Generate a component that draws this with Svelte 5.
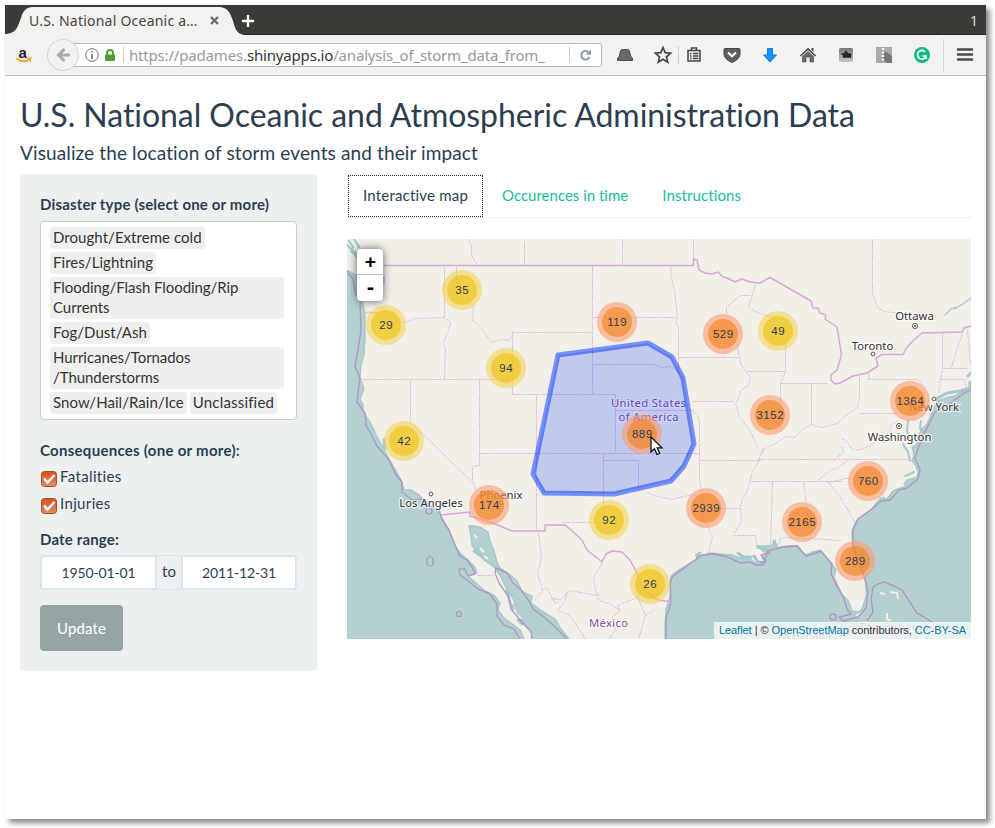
<script>
  const diseases = [
    ['Drought/Extreme cold'],
    ['Fires/Lightning'],
    ['Flooding/Flash Flooding/Rip', 'Currents'],
    ['Fog/Dust/Ash'],
    ['Hurricanes/Tornados', '/Thunderstorms'],
    ['Snow/Hail/Rain/Ice'],
    ['Unclassified']
  ];
  const clusters = [
    [386, 325, 29], [462, 290, 35], [506, 368, 94], [404, 441, 42], [617, 322, 119],
    [723, 334, 529], [778, 331, 49], [770, 415, 3152], [910, 401, 1364], [642, 434, 889],
    [489, 505, 174], [609, 520, 92], [706, 508, 2939], [802, 522, 2165], [868, 481, 760],
    [855, 561, 289], [650, 584, 26]
  ];
  const cities = [
    ['Ottawa', 914.5, 320, 915, 326, true], ['Toronto', 872.5, 350, 873, 354, false],
    ['New York', 934, 411, 934, 399, false], ['Washington', 899.5, 440.5, 899, 426, true],
    ['Los Angeles', 431, 507, 431, 494, false], ['Phoenix', 501, 499, 501, 503, false]
  ];
  const land =
    'M340 232H980V385L971 388 963 391 955 396 946 398 937 401 932 412 927 424 921 430 918 437 916 446 912 447 914 455 912 461 916 466 918 472 917 477 907 480 904 484 907 486 897 489 893 491 887 499 881 498 877 502 872 509 867 513 858 519 855 523 852 531 852 537 853 550 858 559 862 572 866 581 866 597 862 609 858 612 852 611 849 602 842 594 838 586 834 577 836 570 830 562 824 555 820 550 812 552 806 555 801 551 798 546 787 546 778 548 775 541 774 545 766 546 757 546 763 551 766 554 762 558 765 562 759 561 756 563 750 559 740 558 732 555 720 554 710 553 701 556 696 554 697 560 690 563 682 568 677 571 671 576 670 583 671 592 669 600 666 609 665 625V646H575L569 639 561 629 555 619 547 614 539 609 531 603 532 596 522 591 517 581 508 573 500 568 497 562 494 551 490 541 488 532 480 527 474 526 469 526 471 536 472 546 478 552 484 560 494 567 501 577 505 586 511 594 514 603 518 614 524 624 532 631 531 646H526L524 639 520 630 511 623 504 618 498 610 500 603 495 596 484 590 477 584 468 576 477 573 475 567 467 559 460 553 455 545 450 533 444 522 440 514 435 508 426 502 419 495 411 490 404 490 401 480 395 469 389 459 383 447 377 437 374 430 370 422 363 412 363 405 360 399 364 389 360 377 361 365 364 355 365 337 365 313 361 295 359 285 356 275 347 270 340 268Z';
  const maritime =
    'M347 271L353 279 355 292 360 301 361 330 358 350 355 366 360 378 357 402 365 413 366 425 372 436 377 446 389 460 396 475 402 482 402 492 412 500 424 499 429 506 439 510 442 519 449 530 455 545 460 556 467 560 472 567 475 574 468 576 465 569 459 569 460 575 467 580 478 589 490 594 497 604 497 616 504 625 514 629 520 639 M532 639L531 632 521 621 511 609 508 596 499 583 495 573 496 568 507 573 513 583 521 590 529 601 533 609 544 617 555 627 567 639 M666 639L666 618 671 603 670 585 672 577 683 569 692 562 702 555 713 554 728 557 740 563 750 562 756 565 763 565 766 561 761 555 770 553 M760 563L765 561 768 551 782 547 797 546 806 556 813 554 821 551 832 564 831 574 838 588 844 599 847 609 851 614 844 616 839 617 843 621 858 617 866 608 868 592 865 580 858 561 853 544 853 530 858 519 873 508 881 501 890 500 899 490 907 488 918 479 920 470 915 458 917 451 925 432 935 412 952 402 964 393 971 390';
  const states =
    'M468 239L471 246V255L477 265M524 241V265M444 267V317L450 322 448 330 443 342 445 347 444 379M456 267V280L465 295 473 305 472 320 478 325 483 330 491 342 500 339 508 340 510 336 512 340M365 312L377 313 386 321 405 322 414 318 444 317M362 379H512M410 379V422L427 438 471 481M479 379V465L472 466V480L475 490M512 394V332H592M512 394H615V410H693M536 394V530M479 453H699M622 239V265M693 239V259M592 265V394M592 317H677M592 364H653L660 367 670 366 678 371M670 265L671 278 674 290 677 317 675 323 678 327V371L683 380M678 357H738M692 401H733M690 408L697 415 699 423V478L702 500M755 284L748 307 757 312 771 317 784 324M750 295L740 295 726 306V314M726 320L737 346 740 363 744 369 750 377 748 385 740 390 738 398 735 403 739 416 747 427 751 433 757 447M747 371H785M615 410V453M562 522H603V453M603 460H638V492M647 492L656 496 663 497 671 499 683 496 692 494 702 498V516L708 527 712 537 708 552M699 460H760M763 447L757 463 752 471 747 490 742 498 740 507 741 520 733 535H755L756 545M750 481H842M710 508H740M757 459H912M772 481L770 545M803 481L810 538 840 540M778 545L780 537 810 538M828 482L840 497 855 523M828 482L845 478 862 479 870 480 884 497M817 480L830 470 838 467 847 460M760 454L766 447 775 443 785 436 795 437 800 430 810 424 822 427 837 423 845 415 857 407 859 397V376M859 413H915M868 373V379H918L925 387M780 383H827M785 340V371L780 383V430M811 383V423M872 239V293L877 307 883 311 903 313M942 332V368L940 380 938 393M962 333L956 350 951 367M967 330L970 364M942 368H967M940 379H964L966 388M897 420L890 425 889 432 879 437 872 444 861 449 852 449 845 440 841 438M835 458L843 452 841 446M538 532L541 557 537 573 542 590 534 600M542 590L546 587 555 603 560 600M477 575H493M602 562L593 577 595 590 599 600 610 604 620 610M550 598L560 599 569 590 597 595 600 593M567 592L564 601 557 610 568 614 575 623 585 639M620 610L617 605 637 597 643 587M637 597L645 615 654 609M645 615L638 639M620 610L612 617 615 630 608 639M555 524L565 525';
  const border =
    'M384 265.5H693.5V259L697 260 699 270 705 273 712 274 718 272 723 277 727 278 735 282 742 279 750 282 760 283 770 277.5 811 301 813 308 818 308 820 313 826 315 825 319 837 327 841.5 355 837 370 831 375 831 380 835 384 840 383 853 376 867 373 878 366 876 358 882 354.5H903L907 347 913 341 922 333 962 332 964 328 971 326M441 515L470 512 470 516 490 522 512 531H545V525H565L571 530 582 540 587 550 602 562 606 554 612 551 622 552 630 560 637 573 641 585 647 593 658 600 672 602';
</script>

<div class="page">
<div class="window">
  <div class="titlebar">
    <svg class="tabshape" width="250" height="30" viewBox="0 0 250 30"><path d="M0 30V29C12 29 13 20 16 13C18 6 21 2 28 2H214C222 2 225 7 228 16C230 23 231 29 240 30Z" fill="#f3f2f1" /></svg>
    <span class="tabtitle">U.S. National Oceanic a…</span>
    <svg class="close" width="9" height="9" viewBox="0 0 9 9"><path d="M1 1L8 8M8 1L1 8" stroke="#6c6b69" stroke-width="2.4" /></svg>
    <svg class="plus" width="14" height="14" viewBox="0 0 14 14"><path d="M7 1V13M1 7H13" stroke="#fff" stroke-width="2.4" /></svg>
    <span class="one">1</span>
  </div>
  <div class="toolbar">
    <svg class="amazon" width="18" height="18" viewBox="0 0 18 18"><text x="3.4" y="11.6" font-family="Liberation Sans" font-weight="700" font-size="15" fill="#222">a</text><path d="M1.5 12.5Q8 17.5 14.5 13.5" fill="none" stroke="#f5a033" stroke-width="2" /><path d="M12 12.4L15.8 12 15.2 15.8" fill="none" stroke="#f5a033" stroke-width="1.2" /></svg>
    <div class="back"><svg width="16" height="16" viewBox="0 0 16 16"><path d="M15 8H4M9.5 2L3.5 8 9.5 14" fill="none" stroke="#acaba9" stroke-width="3" /></svg></div>
    <div class="url">
      <svg class="info" width="14" height="14" viewBox="0 0 14 14"><circle cx="7" cy="7" r="6.3" fill="none" stroke="#6b6b6b" /><path d="M7 6V11M7 3V4.6" stroke="#6b6b6b" stroke-width="1.6" /></svg>
      <svg class="lock" width="10" height="13" viewBox="0 0 10 13"><path d="M2 6V4Q2 1 5 1T8 4V6" fill="none" stroke="#509f2c" stroke-width="2" /><rect y="5.5" width="10" height="6.5" rx="1" fill="#509f2c" /></svg>
      <i></i>
      <span class="address">https://padames.<b>shinyapps.io</b>/analysis_of_storm_data_from_</span>
      <i class="end"></i>
      <svg class="reload" width="13" height="13" viewBox="0 0 13 13"><path d="M9.3 3A4.3 4.3 0 1 0 10.5 8" fill="none" stroke="#8d9aa8" stroke-width="2" /><path d="M6.5 5.8H12V.5Z" fill="#8d9aa8" /></svg>
    </div>
    <svg class="icons" width="384" height="40" viewBox="602 35 384 40">
      <path d="M622.5 49.5H627.5Q629 49.5 629.4 51L631 57 632.5 58V60.5H617.5V58L619 57 620.6 51Q621 49.5 622.5 49.5Z" fill="#6a6a6a" stroke="#4b4b4b" />
      <path d="M663 47.5L665.2 52.7 670.6 53.2 666.5 56.9 667.7 62.2 663 59.3 658.3 62.2 659.5 56.9 655.4 53.2 660.8 52.7Z" fill="none" stroke="#474747" stroke-width="1.7" />
      <path d="M678.5 46V64" stroke="#cfcecc" />
      <path d="M688 50.5H700V61H688ZM691.5 50V48H696.5V50M690 53.5H691.5M690 56H691.5M690 58.5H691.5M693 53.5H698.5M693 56H698.5M693 58.5H698.5" fill="none" stroke="#474747" stroke-width="1.5" />
      <path d="M725 48.5H739Q740 48.5 740 50V54Q740 59 732 62.5Q724 59 724 54V50Q724 48.5 725 48.5Z" fill="#606060" stroke="#444" />
      <path d="M728 52.5L732 56.3 736 52.5" fill="none" stroke="#fff" stroke-width="2.1" />
      <path d="M767.5 48.5H772.5V55H776.5L770 62 763.5 55H767.5Z" fill="#1693ff" stroke="#087be6" />
      <path d="M800.5 56L808 49 815.5 56" fill="none" stroke="#4c4c4c" stroke-width="1.7" /><path d="M802.5 56.5L808 51.5 813.5 56.5V62H810V57H806V62H802.5Z" fill="#6b6b6b" stroke="#505050" stroke-width=".7" /><path d="M811.5 48H813.5V52L811.5 50Z" fill="#505050" />
      <defs><linearGradient id="gray" x2="0" y2="1"><stop stop-color="#777" /><stop offset="1" stop-color="#c5c5c5" /></linearGradient></defs>
      <rect x="839" y="48" width="14" height="14" rx="1.5" fill="url(#gray)" /><path d="M841.5 54H843.5V57H850.5V54H848.5M846 51.5V57M844 54L846 51.5 848 54Z" fill="#262626" stroke="#262626" stroke-width="1.3" />
      <path d="M876 47H892V63H876Z" fill="#ababab" /><path d="M885 51L892 56V63H887L882 59Z" fill="#777" /><path d="M883 48V61" stroke="#fff" stroke-width="2.2" stroke-dasharray="2 1.5" />
      <circle cx="922" cy="55" r="8" fill="#11b981" /><path d="M925 51.8A4.3 4.3 0 1 0 926 56H922.5M926 56V59" fill="none" stroke="#fff" stroke-width="1.7" />
      <path d="M943.5 39V72" stroke="#d6d5d3" />
      <path d="M958 49.5H972M958 54.5H972M958 59.5H972" stroke="#4a4a4a" stroke-width="2.6" stroke-linecap="round" />
    </svg>
  </div>

  <main>
    <h2>U.S. National Oceanic and Atmospheric Administration Data</h2>
    <h4>Visualize the location of storm events and their impact</h4>
    <div class="columns">
      <aside>
        <label class="head" for="types">Disaster type (select one or more)</label>
        <div class="select" id="types">
          {#each diseases as lines}
            <div class="item" class:wide={lines.length > 1}>{lines[0]}{#if lines[1]}<br />{lines[1]}{/if}</div>
          {/each}
        </div>
        <div class="head cons">Consequences (one or more):</div>
        {#each ['Fatalities', 'Injuries'] as name}
          <div class="check"><svg width="16" height="16" viewBox="0 0 16 16"><defs><linearGradient id="or" x2="0" y2="1"><stop stop-color="#d4501f" /><stop offset="1" stop-color="#e38f6b" /></linearGradient></defs><rect x=".5" y=".5" width="15" height="15" rx="3" fill="url(#or)" stroke="#a84b2b" /><path d="M3 7.5L6.5 11.5 13.5 4" fill="none" stroke="#fff" stroke-width="2.4" /></svg><span>{name}</span></div>
        {/each}
        <div class="head range">Date range:</div>
        <div class="dates"><div class="date">1950-01-01</div><div class="to">to</div><div class="date last">2011-12-31</div></div>
        <button>Update</button>
      </aside>
      <section>
        <nav><a class="active">Interactive map</a><a>Occurences in time</a><a>Instructions</a></nav>
        <div class="map">
          <svg width="624" height="400" viewBox="347 239 624 400">
            <rect x="347" y="239" width="624" height="400" fill="#b5d0d0" />
            <path d={land} fill="#f2efe9" stroke="#a3c9cb" stroke-width="1.3" />
            <g fill="none" stroke="#a3c9cb" stroke-linecap="round" stroke-linejoin="round">
              <path d="M349 241L353 247 351 251 358 258 360 266M347 245L351 249 356 253 360 254M354 239L359 247" stroke-width="2.2" stroke-dasharray="3 1" />
              <path d="M347 274L354 280M368 312L378 313M384 277V284" stroke-width="1.2" />
              <path d="M945 315L951 309 957 307M954 309L963 304 971 298" stroke-width="1.2" />
              <path d="M936 399L947 393 960 391 971 388M968 376L971 373M970 382V388" stroke-width="3" />
              <path d="M908 421L907 430 909 438M921 421L920 428 925 434M903 444L908 452 910 461M905 476L914 472" stroke-width="2" />
              <path d="M738 553L743 557 751 557M758 547L767 550M758 562L754 556M697 556L700 553M774 541V546M384 440L385 448M474 551L481 556M507 590L513 609M518 620L522 624" stroke-width="3" />
            </g>
            <path d="M474 535l3 3M480 548l4 4M484 556l4 3M511 597l2 7M518 615l3 4M880 593l5 1M890 592l7 1 1 6M887 613v6l4 2M861 613l-5 3" fill="none" stroke="#f2efe9" stroke-width="2" />
            <path d={states} fill="none" stroke="#dfbfdf" stroke-width="1" stroke-dasharray="9 1 3 1" opacity=".95" transform="translate(.5 .5)" />
            <path d={maritime} fill="none" stroke="#ad8fc0" stroke-width="1.4" stroke-linejoin="round" opacity=".85" />
            <path d="M867 621L873 612 871 600 873 587 878 584 885 582 902 590 909 601 917 613 932 622" fill="none" stroke="#ad8fc0" stroke-width="1.2" />
            <g fill="none" stroke="#ad8fc0" stroke-width="1.2"><path d="M427 559Q430 554 433 559V564Q430 569 427 564Z" /><circle cx="459" cy="614" r="2.5" /><circle cx="833" cy="617" r="3" /><circle cx="429" cy="511" r="3" /></g>
            <path d={border} fill="none" stroke="#d6a9d5" stroke-width="1.5" stroke-linejoin="round" />
            <g class="labels">
              {#each cities as [name, x, y, cx, cy, capital]}
                <circle {cx} {cy} r={capital ? 2.6 : 1.9} fill="#f7f5f0" stroke="#555" stroke-width=".9" />
                {#if capital}<circle {cx} {cy} r="1" fill="#444" />{/if}
                <text {x} {y}>{name}</text>
              {/each}
              <g class="country"><text x="648.5" y="407" textLength="75">United States</text><text x="648.5" y="421" textLength="60">of America</text><text x="608.5" y="627" textLength="39">México</text></g>
              <text x="897" y="631" class="country" opacity=".6" textLength="76">The Bahamas</text><text x="810" y="640" opacity=".6" textLength="65">La Habana ⊙</text>
            </g>
            <path d="M558 355L648 343 672 357 683 378 694 444 684 466 671 481 614 494 544 493 533 474Z" fill="#03f" fill-opacity=".2" stroke="#03f" stroke-opacity=".5" stroke-width="5" stroke-linejoin="round" />
          </svg>
          {#each clusters as [x, y, n]}
            <div class="cluster" class:large={n >= 100} style="left:{x - 367}px;top:{y - 259}px"><div>{n}</div></div>
          {/each}
          <svg class="cursor" width="14" height="20" viewBox="0 0 14 20"><path d="M1 1V16L4.5 12.8 7 18.5 9.7 17.3 7.2 11.8H12Z" fill="#fff" stroke="#111" stroke-width="1.3" /></svg>
          <div class="zoom"><span>+</span><span>-</span></div>
          <div class="credit"><a>Leaflet</a> | © <a>OpenStreetMap</a> contributors, <a>CC-BY-SA</a></div>
        </div>
      </section>
    </div>
  </main>
</div>
</div>

<style>
  :global(body) { background: #fff; }
  * { box-sizing: border-box; }
  svg { display: block; flex: none; }
  .page { height: 828px; padding: 5px 0 0 5px; overflow: hidden; }
  .window { width: 981px; height: 814px; background: #fff; box-shadow: 4px 4px 5px rgba(0,0,0,.45), 0 0 1px rgba(0,0,0,.15); font-family: Lato, sans-serif; font-variant-ligatures: none; color: #2c3e50; }
  .titlebar { height: 30px; background: #3c3b37; border-bottom: 1px solid #292825; display: flex; align-items: center; position: relative; font: 14px/20px "Noto Sans", sans-serif; }
  .tabshape { position: absolute; left: 0; top: 0; }
  .tabtitle { position: relative; margin-left: 24px; width: 181px; color: #45443f; white-space: nowrap; margin-top: 2px; letter-spacing: .23px; }
  .close { position: relative; margin-top: 2px; }
  .plus { margin: 3px 0 0 22px; }
  .one { color: #dfdbd2; margin: 3px 8px 0 auto; }
  .toolbar { height: 41px; background: #f3f2f1; border-bottom: 1px solid #bcbbb9; display: flex; align-items: center; }
  .amazon { margin-left: 10px; margin-top: 0; overflow: visible; }
  .back { margin-left: 14px; width: 32px; height: 32px; border: 1px solid #d6d5d3; border-radius: 50%; background: #f3f2f1; display: grid; place-items: center; z-index: 1; }
  .url { margin-left: -8px; width: 532px; height: 24px; border: 1px solid #bcbbba; border-radius: 0 3px 3px 0; background: #fff; display: flex; align-items: center; padding-left: 13px; }
  .lock { margin-left: 6px; }
  .url i { width: 1px; height: 16px; background: #ccc; margin-left: 8px; }
  .address { margin-left: 5px; width: 440px; color: #999; font: 15px/22px "Noto Sans", sans-serif; white-space: nowrap; letter-spacing: -.17px; }
  .address b { font-weight: 400; color: #333; }
  .url .end { margin-left: 0; }
  .reload { margin-left: 9px; }
  main { padding: 21px 15px 0; }
  h2 { margin: 0; font-size: 32px; line-height: 35px; font-weight: 400; white-space: nowrap; letter-spacing: -.045px; }
  h4 { margin: 10px 0 0; font-size: 19px; line-height: 21px; font-weight: 400; white-space: nowrap; letter-spacing: .12px; }
  .columns { display: flex; gap: 30px; margin-top: 11px; }
  aside { width: 297px; height: 497px; background: #ecf0f1; border-radius: 4px; padding: 20px; font-size: 15px; }
  .head { display: block; font-weight: 700; line-height: 21px; font-size: 15px; white-space: nowrap; letter-spacing: .17px; }
  .select { margin-top: 6px; height: 199px; border: 1px solid #ccc; border-radius: 4px; background: #fff; padding: 5px 12px 0 9px; display: flex; flex-wrap: wrap; align-content: flex-start; gap: 3px; color: #333; line-height: 20px; }
  .item { background: #efefef; border-radius: 3px; padding: 0 3px 2px; white-space: nowrap; letter-spacing: .05px; }
  .item:last-child { letter-spacing: .18px; }
  .wide { width: 234px; letter-spacing: -.06px; }
  .cons { margin-top: 20px; letter-spacing: .28px; }
  .check { display: flex; height: 27px; gap: 3px; line-height: 21px; padding-left: 1px; margin-top: 0; letter-spacing: .35px; }
  .check svg { margin-top: 10px; }
  .check span { margin-top: 5px; }
  .range { margin-top: 14px; }
  .dates { display: flex; margin-top: 5px; height: 35px; font-size: 14px; line-height: 31px; text-align: center; }
  .date { width: 117px; border: 2px solid #dce4ec; background: #fff; border-radius: 3px 0 0 3px; letter-spacing: -.15px; }
  .last { width: 116px; border-radius: 0 3px 3px 0; }
  .to { width: 24px; border: solid #dce4ec; border-width: 1px 0; font-size: 15px; }
  button { margin-top: 15px; width: 83px; height: 46px; border: 0; border-radius: 4px; background: #95a5a6; color: #fff; font: 15px Lato, sans-serif; letter-spacing: .1px; }
  section { width: 624px; }
  nav { display: flex; height: 44px; border-bottom: 1px solid #ecf0f1; font-size: 15px; line-height: 38px; color: #18bc9c; white-space: nowrap; }
  nav a { padding: 2px 17px; }
  nav a:last-child { letter-spacing: .1px; }
  nav .active { color: #2c3e50; height: 42px; width: 135px; margin: 1px 2px 0 1px; padding: 0 14px; border: 1px dotted #222; letter-spacing: .2px; }
  .map { margin-top: 21px; position: relative; width: 624px; height: 400px; overflow: hidden; }
  .labels text { font: 11.3px "Noto Sans", sans-serif; fill: #333; text-anchor: middle; paint-order: stroke; stroke: rgba(255,255,255,.7); stroke-width: 2.5px; }
  .country text, .labels .country { fill: #8d4f95; }
  .cluster { position: absolute; width: 40px; height: 40px; border-radius: 50%; padding: 5px; background: rgba(241,211,87,.6); }
  .cluster div { width: 30px; height: 30px; border-radius: 50%; background: rgba(240,194,12,.6); font: 11.5px/30px "Liberation Sans", Arial, sans-serif; letter-spacing: .5px; padding-left: .5px; display: flex; justify-content: center; }
  .large { background: rgba(253,156,115,.6); }
  .large div { background: rgba(241,128,23,.6); }
  .cursor { position: absolute; left: 303px; top: 197px; }
  .zoom { position: absolute; left: 10px; top: 10px; width: 26px; height: 52px; border-radius: 4px; background: #fff; box-shadow: 0 0 8px rgba(0,0,0,.6); font: 700 18px/26px "DejaVu Sans Mono", monospace; color: #000; text-align: center; }
  .zoom span { display: block; height: 26px; padding-left: 1px; }
  .zoom span:first-child { border-bottom: 1px solid #bbb; }
  .credit { position: absolute; right: 0; bottom: 0; height: 17px; background: rgba(255,255,255,.7); padding: 0 5px; font: 11px/17px "Liberation Sans", Arial, sans-serif; letter-spacing: -.04px; color: #333; white-space: nowrap; }
  .credit a { color: #0078a8; }
</style>
